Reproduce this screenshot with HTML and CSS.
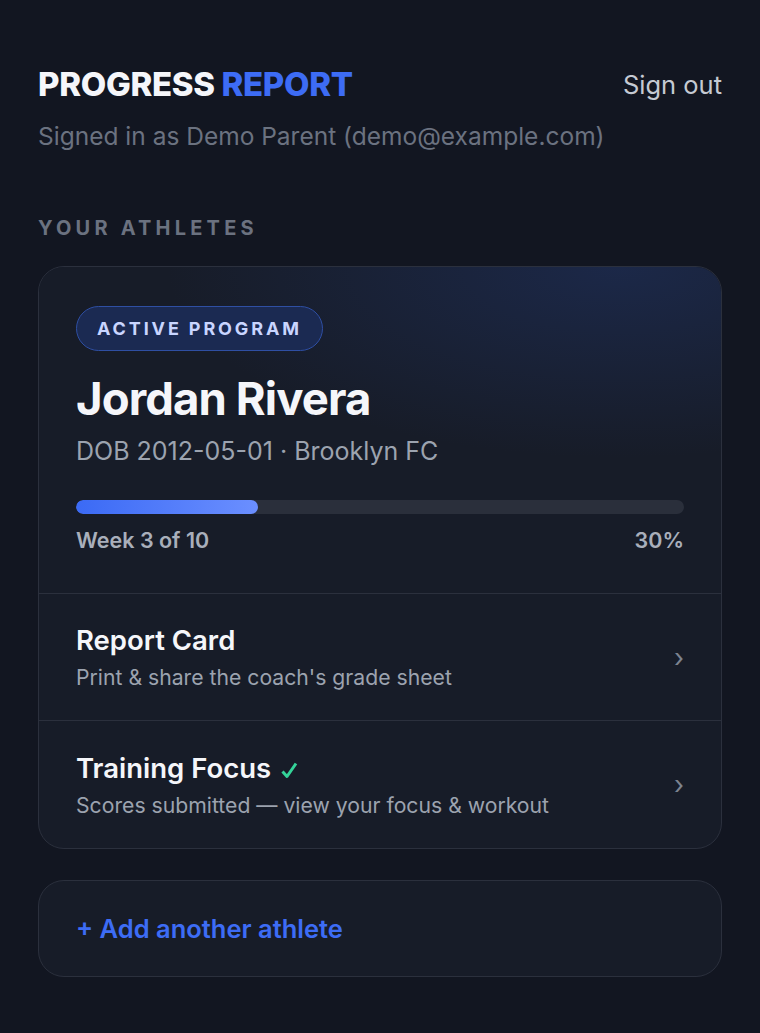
FILE: index.html
```html
<!DOCTYPE html>
<html lang="en">
<head>
  <meta charset="UTF-8">
  <meta name="viewport" content="width=device-width, initial-scale=1.0">
  <title>Progress Report</title>
  <link rel="stylesheet" href="styles.css">
</head>
<body>
  <div class="page">
    <!-- Header -->
    <header class="header">
      <div class="header-top">
        <h1 class="brand">PROGRESS <span class="brand-accent">REPORT</span></h1>
        <a class="sign-out" href="#">Sign out</a>
      </div>
      <p class="signed-in">Signed in as Demo Parent (demo@example.com)</p>
    </header>

    <h2 class="section-label">YOUR ATHLETES</h2>

    <!-- Athlete card -->
    <div class="athlete-card">
      <div class="athlete-head">
        <span class="badge">ACTIVE PROGRAM</span>
        <h3 class="athlete-name">Jordan Rivera</h3>
        <p class="athlete-meta">DOB 2012-05-01 · Brooklyn FC</p>
        <div class="progress">
          <div class="progress-fill" style="width: 30%"></div>
        </div>
        <div class="progress-labels">
          <span>Week 3 of 10</span>
          <span>30%</span>
        </div>
      </div>

      <a class="card-row" href="#">
        <div class="row-text">
          <div class="row-title">Report Card</div>
          <div class="row-sub">Print &amp; share the coach's grade sheet</div>
        </div>
        <span class="chevron">›</span>
      </a>

      <a class="card-row" href="#">
        <div class="row-text">
          <div class="row-title">Training Focus
            <svg class="check" width="18" height="18" viewBox="0 0 18 18" aria-hidden="true">
              <path d="M2.5 10.5 L7 15.5 L16 2.5" fill="none" stroke="#34d399" stroke-width="3" stroke-linejoin="round"/>
            </svg>
          </div>
          <div class="row-sub">Scores submitted — view your focus &amp; workout</div>
        </div>
        <span class="chevron">›</span>
      </a>
    </div>

    <a class="add-card" href="#">+ Add another athlete</a>
  </div>
</body>
</html>
```

FILE: styles.css
```css
/* Reset */
* {
  margin: 0;
  padding: 0;
  box-sizing: border-box;
}

body {
  font-family: 'Inter', 'Noto Sans', sans-serif;
  background: #121621;
  color: #f3f4f6;
  min-height: 100vh;
}

a {
  text-decoration: none;
  color: inherit;
}

.page {
  padding: 64px 38px 40px;
}

/* Header */
.header-top {
  display: flex;
  justify-content: space-between;
  align-items: center;
}

.brand {
  font-size: 33px;
  font-weight: 800;
  line-height: 40px;
  letter-spacing: -0.01em;
  color: #f5f6fa;
}

.brand-accent {
  color: #3d6cf5;
}

.sign-out {
  font-size: 25.5px;
  color: #c5cad3;
}

.signed-in {
  margin-top: 17px;
  font-size: 24.5px;
  line-height: 30px;
  color: #6b7280;
}

.section-label {
  margin-top: 65px;
  font-size: 20px;
  font-weight: 700;
  letter-spacing: 0.21em;
  line-height: 24px;
  color: #6b7280;
}

/* Athlete card */
.athlete-card {
  margin-top: 26px;
  border: 1px solid #2b303d;
  border-radius: 26px;
  background: #171c28;
  overflow: hidden;
}

.athlete-head {
  padding: 39px 37px 40px;
  background:
    radial-gradient(ellipse 85% 75% at 85% 0%, rgba(32, 52, 104, 0.5), rgba(32, 52, 104, 0) 78%),
    #171c28;
  border-bottom: 1px solid #2b303d;
}

.badge {
  display: inline-block;
  padding: 0 20px;
  height: 45px;
  line-height: 43px;
  border: 1px solid #2f4fa3;
  border-radius: 999px;
  background: #1b2a52;
  color: #c9d5ff;
  font-size: 18px;
  font-weight: 700;
  letter-spacing: 0.16em;
}

.athlete-name {
  margin-top: 22px;
  font-size: 45.5px;
  font-weight: 700;
  line-height: 52px;
  letter-spacing: -0.02em;
  color: #f5f6fa;
}

.athlete-meta {
  margin-top: 11px;
  font-size: 25px;
  line-height: 30px;
  color: #9ca3af;
}

.progress {
  margin-top: 34px;
  height: 14px;
  border-radius: 7px;
  background: #2a2f3b;
  overflow: hidden;
}

.progress-fill {
  height: 100%;
  border-radius: 7px;
  background: linear-gradient(90deg, #3b6af5, #6b8fff);
}

.progress-labels {
  margin-top: 13px;
  display: flex;
  justify-content: space-between;
  font-size: 21.5px;
  font-weight: 600;
  line-height: 26px;
  color: #a9afbb;
}

/* Rows */
.card-row {
  display: flex;
  align-items: center;
  justify-content: space-between;
  padding: 0 37px;
  height: 127px;
  border-bottom: 1px solid #2b303d;
}

.card-row:last-child {
  border-bottom: none;
}

.row-title {
  font-size: 27.5px;
  font-weight: 600;
  line-height: 32px;
  color: #f5f6fa;
}

.check {
  margin-left: 2px;
  vertical-align: -1px;
}

.row-sub {
  margin-top: 8px;
  font-size: 21.2px;
  line-height: 26px;
  color: #9ca3af;
}

.chevron {
  font-size: 26px;
  color: #7d8390;
}

/* Add card */
.add-card {
  display: flex;
  align-items: center;
  margin-top: 31px;
  height: 97px;
  padding: 0 37px;
  border: 1px solid #2b303d;
  border-radius: 26px;
  background: #171c28;
  color: #3d6cf5;
  font-size: 25.5px;
  font-weight: 600;
}
```
